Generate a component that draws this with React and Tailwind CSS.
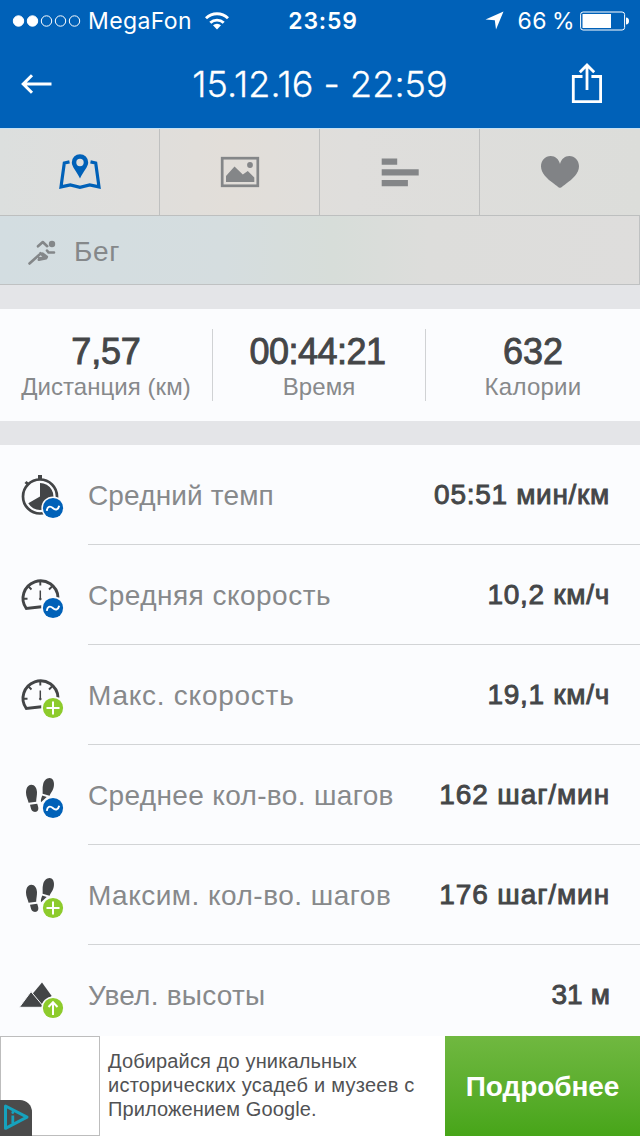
import React from "react";

const sans = "font-['Liberation_Sans',Arial,sans-serif]";
const inter = "font-['Inter',sans-serif]";
const medium = "[-webkit-text-stroke:0.9px_#444648] text-[#444648]";

function WaveBadge() {
  return (
    <g>
      <circle cx="53" cy="508" r="11.6" fill="#fbfcfe" />
      <circle cx="53" cy="508" r="10.1" fill="#0061b8" />
      <path d="M46.800 510.800c.4-4.200 3.200-5.400 6-2.800s5.600 1.600 6.400-2.200" fill="none" stroke="#fff" strokeWidth="1.900" />
    </g>
  );
}

function PlusBadge() {
  return (
    <g>
      <circle cx="53" cy="508" r="11.6" fill="#fbfcfe" />
      <circle cx="53" cy="508" r="10.1" fill="#8dcb2c" />
      <path d="M46.500 508h13M53 501.500v13" stroke="#fff" strokeWidth="2" />
    </g>
  );
}

function UpBadge() {
  return (
    <g>
      <circle cx="53" cy="508" r="11.6" fill="#fbfcfe" />
      <circle cx="53" cy="508" r="10.1" fill="#8dcb2c" />
      <path d="M53 515v-12.500M48.500 507l4.500-4.700 4.500 4.700" fill="none" stroke="#fff" strokeWidth="2" />
    </g>
  );
}

function Stopwatch() {
  return (
    <g>
      <circle cx="40" cy="496.500" r="17" fill="none" stroke="#434547" strokeWidth="2.700" />
      <path d="M38 475h4v4h-4zM24.500 483l2-2 3 2.500-2 2z" fill="#434547" />
      <path d="M40 496.500V483a13.500 13.500 0 1 1-11.700 20.300z" fill="#434547" />
    </g>
  );
}

function Gauge() {
  return (
    <g fill="none" stroke="#434547">
      <path d="M58 497.500A17.500 17.500 0 1 0 26.300 508.500L41.500 506.800" strokeWidth="2.900" strokeLinejoin="miter" />
      <path d="M40.300 481v4.500M28.500 486.500l3 3M52 486.500l-3 3M23.500 498.800h4M56.500 498.800h-3.500" strokeWidth="1.900" />
      <path d="M40.300 490.500v8.500" strokeWidth="1.500" />
      <circle cx="40.300" cy="499" r="1" fill="#434547" strokeWidth="0.600" />
    </g>
  );
}

function Feet() {
  return (
    <g fill="#434547">
      <path d="M30.300 484.900c4-.8 6.500 3 6.700 7.200.1 3.600-.8 6.300-.8 9.600l-7.600 1.100c-.7-3.700-2.700-6-2.600-10.200.1-4 1.300-7.100 4.300-7.700z" />
      <path d="M30 504.800l7.200-1.100c.8 2.600 1.600 4.300.9 6.300-.6 1.600-2.500 2.200-4.200 1.800-3-.8-3-4-3.900-7z" />
      <path d="M50.500 478.200c3 .6 4 4.400 3.300 8.400-.7 4.400-3 6-4.200 9.200l-7-2.100c.3-3.400-.4-5.600.5-9.300.9-3.900 4-6.900 7.400-6.200z" />
      <path d="M42.300 495.500l4.400 1.400-5.700 5.300c-.5-2.800.5-4.400 1.300-6.700z" />
    </g>
  );
}

function Mountains() {
  return (
    <g fill="#434547">
      <path d="M42 482.600l9.700 13.400-11.200 9-7.700-11.500z" />
      <path d="M31 491.600L19.400 507.300h24.800z" stroke="#fbfcfe" strokeWidth="1" />
    </g>
  );
}

const metrics = [
  { label: "Средний темп", value: "05:51 мин/км", icon: Stopwatch, badge: WaveBadge, ls: "tracking-[0.15px]", vs: "tracking-[0.7px]" },
  { label: "Средняя скорость", value: "10,2 км/ч", icon: Gauge, badge: WaveBadge, ls: "tracking-[0.48px]", vs: "tracking-[0.7px]" },
  { label: "Макс. скорость", value: "19,1 км/ч", icon: Gauge, badge: PlusBadge, ls: "tracking-[0.75px]", vs: "tracking-[0.7px]" },
  { label: "Среднее кол-во. шагов", value: "162 шаг/мин", icon: Feet, badge: WaveBadge, ls: "tracking-[0.35px]", vs: "tracking-[0.9px]" },
  { label: "Максим. кол-во. шагов", value: "176 шаг/мин", icon: Feet, badge: PlusBadge, ls: "tracking-[0.48px]", vs: "tracking-[0.9px]" },
  { label: "Увел. высоты", value: "31 м", icon: Mountains, badge: UpBadge, ls: "tracking-[0.23px]", vs: "tracking-[0.1px]" },
];

function StatusBar() {
  return (
    <div className="grid h-10 grid-cols-[1fr_auto_1fr] items-center pl-[12px] pr-[10px] pt-px text-[23px] text-white">
      <div className="flex items-center">
        <svg width="70" height="14" viewBox="0 0 70 14" fill="none" stroke="#fff">
          <circle cx="6.500" cy="7" r="5.200" fill="#fff" />
          <circle cx="20.500" cy="7" r="5.200" fill="#fff" />
          <circle cx="34.500" cy="7" r="5.200" />
          <circle cx="48.500" cy="7" r="5.200" />
          <circle cx="62.500" cy="7" r="5.200" />
        </svg>
        <span className="ml-[6px] mt-px tracking-[0.4px]">MegaFon</span>
        <svg className="ml-[12px]" width="26" height="20" viewBox="0 0 26 20" fill="none" stroke="#fff" strokeWidth="2.900">
          <path d="M2 7.200a16 16 0 0 1 22 0M6.300 11.800a9.800 9.800 0 0 1 13.400 0" />
          <path d="M13 18.500l-4-4.200a5.700 5.700 0 0 1 8 0z" fill="#fff" stroke="none" />
        </svg>
      </div>
      <span className="ml-[4px] mt-px font-semibold tracking-[0.8px]">23:59</span>
      <div className="flex items-center justify-end">
        <svg width="19" height="19" viewBox="0 0 19 19"><path d="M18.500.5L11 18.500 9.800 9.200.5 8.400z" fill="#fff" /></svg>
        <span className="ml-[13px] mt-px whitespace-nowrap tracking-[0.5px] [word-spacing:-2px]">66 %</span>
        <svg className="ml-[5px]" width="50" height="20" viewBox="0 0 50 20">
          <rect x=".6" y="1" width="44" height="18" rx="2.500" fill="none" stroke="#fff" />
          <path d="M2.500 3H31v14H2.500zM46 6.500c2 0 3 1.500 3 3.500s-1 3.500-3 3.500z" fill="#fff" />
        </svg>
      </div>
    </div>
  );
}

function Header() {
  return (
    <header className={`h-32 bg-[#0061b8] ${inter}`}>
      <StatusBar />
      <div className="grid h-[88px] grid-cols-[64px_1fr_64px] items-center text-white">
        <svg className="ml-[21px]" width="31" height="20" viewBox="0 0 31 20" fill="none" stroke="#fff" strokeWidth="3">
          <path d="M2 10h28.500M11 1.200L2.200 10l8.800 8.800" />
        </svg>
        <h1 className="text-center text-[36px] font-light leading-none tracking-[0.05px] [-webkit-text-stroke:0.3px_#fff]">15.12.16 - 22:59</h1>
        <svg className="-ml-[5px] -mt-[3px]" width="32" height="42" viewBox="0 0 32 42" fill="none" stroke="#fff" strokeWidth="2.800">
          <path d="M11.500 14.500H2.300v25.100h27.300V14.500h-9.200M16 28V3M8.800 10.300L16 3l7.200 7.300" />
        </svg>
      </div>
    </header>
  );
}

function Tabs() {
  const cell = "flex items-center justify-center border-r border-[#bfc0c0]";
  return (
    <nav className="grid h-[88px] grid-cols-4 border-b border-t border-b-[#bdbfbf] border-t-[#c4e2f5] bg-[linear-gradient(90deg,#dcdfde_0%,#dfdedc_20%,#e2ded9_36%,#dfdedc_55%,#dcddda_100%)]">
      <div className={cell}>
        <svg className="ml-px" width="44" height="38" viewBox="58 152 44 38" fill="none" stroke="#0061b8" strokeWidth="3.200">
          <path d="M69.500 160.900l-5.200 1.100-3.300 23.900 9.300-2 9.700 2.500 9.700-2.500 9.300 2-3.300-23.900-5.200-1.100" />
          <path fill="#0061b8" stroke="none" fillRule="evenodd" d="M80 153.200a8.200 8.200 0 0 1 8.200 8.200c0 4.400-5 9-8.200 16-3.200-7-8.200-11.600-8.200-16a8.200 8.200 0 0 1 8.200-8.200zm0 4.600a3.700 3.700 0 1 0 0 7.400 3.700 3.700 0 0 0 0-7.400z" />
        </svg>
      </div>
      <div className={cell}>
        <svg className="ml-px" width="40" height="32" viewBox="220 156 40 32" fill="#848688">
          <rect x="222.200" y="158.200" width="35.600" height="27.600" fill="none" stroke="#848688" strokeWidth="2.700" />
          <path d="M226 182v-6l8.500-9.500 8.300 8 5-3.500 6.500 6.500v4.500z" />
          <circle cx="250" cy="165" r="2.900" />
        </svg>
      </div>
      <div className={cell}>
        <svg className="mt-px" width="38" height="30" viewBox="381 158 38 30" fill="#848688">
          <path d="M381.700 158.600h15.500v6.200h-15.500zM381.700 169.200h37v6.300h-37zM381.700 180h26.200v6.200h-26.200z" />
        </svg>
      </div>
      <div className="flex items-center justify-center">
        <svg width="40" height="34" viewBox="540 155 40 34" fill="#818386">
          <path d="M560 187.700c-1.400 0-2.500-1.500-6-4-7-5-13-10.500-13-17.500 0-6 4.200-10.300 9.700-10.300 4.600 0 8 3 9.300 8.100 1.300-5.100 4.700-8.100 9.300-8.100 5.500 0 9.700 4.300 9.700 10.300 0 7-6 12.500-13 17.500-3.500 2.500-4.600 4-6 4z" />
        </svg>
      </div>
    </nav>
  );
}

function Activity() {
  return (
    <div className="flex h-[69px] items-center border-b border-r border-[#bfc1c2] bg-[linear-gradient(90deg,#d3dde1_0%,#d5dddf_35%,#d7ddd9_52%,#dddddb_67%,#dedddc_100%)] pl-[27px]">
      <svg className="mt-[5px]" width="30" height="28" viewBox="27 239 30 28" fill="none" stroke="#848789" strokeWidth="2.600" strokeLinecap="round" strokeLinejoin="round">
        <path d="M38 246.300l4.800-4.300 4.400 4.200M29.500 263.500l9.800-8.800M40.500 253.200l4.900 4.600-6.200.4M42.500 253.600l4.300 3.300M38.800 259.800l7.400-1.600M47 250.500l1.500 2h5.500" />
        <circle cx="52" cy="244" r="3.200" fill="#848789" stroke="none" />
      </svg>
      <span className="ml-[17px] mt-[4px] text-[28px] leading-none tracking-[0.6px] text-[#85888a]">Бег</span>
    </div>
  );
}

function Stat({ value, label, vs, ls }) {
  return (
    <div className="flex h-[72px] flex-col items-center">
      <div className={`mt-[5px] text-[36px] leading-[36px] ${medium} ${vs}`}>{value}</div>
      <div className={`mt-[3px] whitespace-nowrap text-[24px] leading-[28px] text-[#87898b] ${ls}`}>{label}</div>
    </div>
  );
}

function Metric({ item }) {
  const Icon = item.icon;
  const Badge = item.badge;
  return (
    <li className="flex h-[100px] shrink-0 items-center pl-[18px]">
      <svg width="50" height="50" viewBox="18 470 50 50" className="shrink-0">
        <Icon />
        <Badge />
      </svg>
      <div className="ml-5 flex h-full flex-1 items-center justify-between whitespace-nowrap border-b border-[#d2d4d6] pr-[30px] pt-[2px] text-[28px]">
        <span className={`text-[#87898b] ${item.ls}`}>{item.label}</span>
        <span className={`-mt-[2px] ${medium} ${item.vs}`}>{item.value}</span>
      </div>
    </li>
  );
}

function Banner() {
  return (
    <footer className="flex h-[100px] bg-white">
      <div className="flex w-[100px] items-end border border-[#bdbdbd]">
        <div className="-mb-px -ml-px flex h-9 w-8 items-center rounded-tr-[12px] bg-[#4b4b4b] pl-[3px]">
          <svg className="-mt-[3px]" width="27" height="28" viewBox="0 0 27 28" fill="none" stroke="#16a2bd" strokeLinejoin="round">
            <path d="M2.500 3L24 14.200 2.500 25.300z" strokeWidth="3" />
            <path d="M9.800 12.500v8" strokeWidth="2.800" />
            <circle cx="9.800" cy="9.500" r="1.400" fill="#16a2bd" stroke="none" />
          </svg>
        </div>
      </div>
      <p className="flex-1 whitespace-nowrap pl-2 pt-[13px] text-[20px] leading-6 text-[#515254]">
        <span className="block tracking-[0.14px]">Добирайся до уникальных</span>
        <span className="block tracking-[0.25px]">исторических усадеб и музеев с</span>
        <span className="block tracking-[0.1px]">Приложением Google.</span>
      </p>
      <button className="w-[195px] bg-linear-to-b from-[#70b840] to-[#47a518] pt-[2px] text-[28px] font-bold tracking-[-0.1px] text-white">Подробнее</button>
    </footer>
  );
}

export default function App() {
  return (
    <div className={`flex h-[1136px] w-[640px] flex-col overflow-hidden bg-[#e4e5e8] ${sans}`}>
      <Header />
      <Tabs />
      <Activity />
      <section className="mt-6 grid h-28 grid-cols-[213px_213px_214px] items-center divide-x divide-[#d0d2d4] bg-[#fbfcfe]">
        <Stat value="7,57" label="Дистанция (км)" vs="tracking-[-0.2px]" ls="tracking-[0.05px]" />
        <Stat value="00:44:21" label="Время" vs="tracking-[-0.5px] pr-[3px]" ls="tracking-[0.1px]" />
        <Stat value="632" label="Калории" vs="tracking-[0px]" ls="tracking-[0.25px]" />
      </section>
      <ul className="mt-6 flex h-[591px] flex-col overflow-hidden bg-[#fbfcfe]">
        {metrics.map((item) => <Metric key={item.label} item={item} />)}
      </ul>
      <Banner />
    </div>
  );
}
